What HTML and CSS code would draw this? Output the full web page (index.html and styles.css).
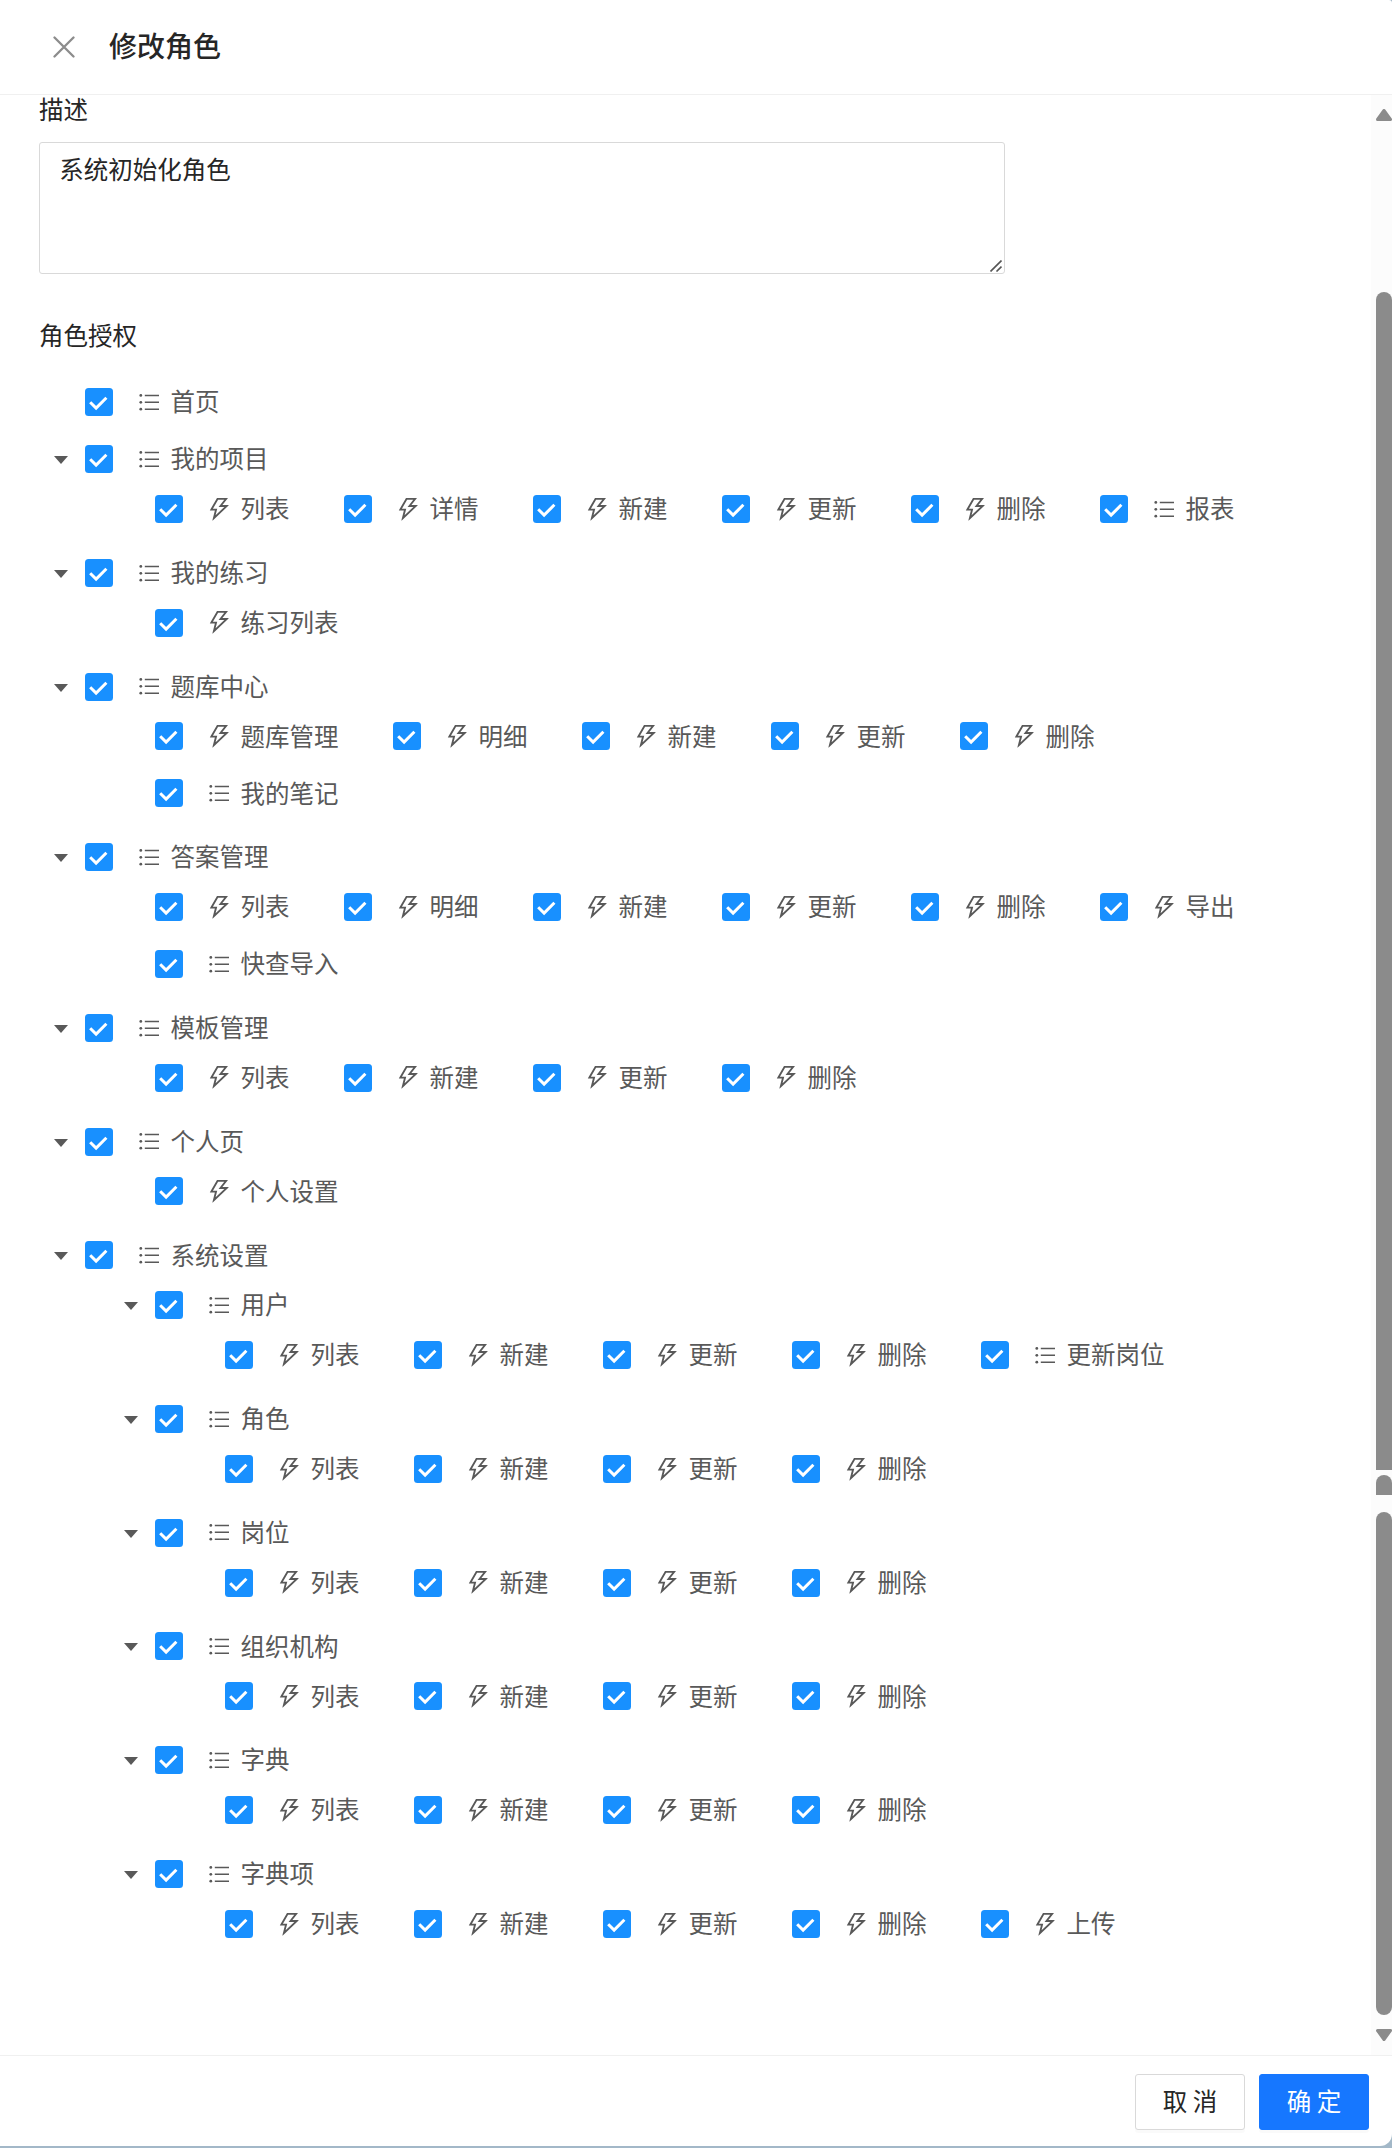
FILE: index.html
```html
<!DOCTYPE html>
<html lang="zh-CN">
<head>
  <meta charset="UTF-8" />
  <meta name="viewport" content="width=device-width, initial-scale=1.0"/>
  <title>修改角色</title>
  <link rel="stylesheet" href="styles.css">
</head>
<body>

  <!-- icon sprites -->
  <svg class="sprites" width="0" height="0">
    <symbol id="icon-list" viewBox="0 0 24.5 24.5">
      <path d="M7.8 5.4h14.2M7.8 12.3h14.2M7.8 19.2h14.2" stroke="currentColor" stroke-width="1.5"/>
      <circle cx="3.8" cy="5.4" r="1.4" fill="currentColor"/>
      <circle cx="3.8" cy="12.3" r="1.4" fill="currentColor"/>
      <circle cx="3.8" cy="19.2" r="1.4" fill="currentColor"/>
    </symbol>
    <symbol id="icon-action" viewBox="64 64 896 896">
      <path fill="currentColor" d="M848 359.3H627.7L825.8 109c4.1-5.3.4-13-6.3-13H436c-2.8 0-5.5 1.5-6.9 4L170 547.5c-3.1 5.3.7 12 6.9 12h174.4l-89.4 357.6c-1.9 7.8 7.5 13.3 13.3 7.7L853.5 373c5.2-4.9 1.7-13.7-5.5-13.7zM378.2 732.5l60.3-241H281.1l189.6-327.4h224.6L487 427.4h211L378.2 732.5z"/>
    </symbol>
    <symbol id="icon-check" viewBox="0 0 28 28">
      <path d="M5.2 14.2l5.9 5.9L21.4 9.8" fill="none" stroke="#fff" stroke-width="3"/>
    </symbol>
  </svg>

  <div class="drawer">
    <header class="drawer-header">
      <svg class="close" viewBox="0 0 22 22"><path d="M1.5 1.5l19 19M20.5 1.5l-19 19"/></svg>
      <h1>修改角色</h1>
    </header>

    <div class="drawer-body">
      <div class="form">
        <label class="label" for="desc">描述</label>
        <div class="textarea-wrap">
          <textarea id="desc">系统初始化角色</textarea>
          <svg class="resizer" viewBox="0 0 12 12"><path d="M.5 11.5l11-11M6.5 11.5l5-5"/></svg>
        </div>
        <div class="label">角色授权</div>
        <ul class="tree" id="tree"></ul>
      </div>

      <div class="scrollbar">
        <svg class="arrow" viewBox="0 0 16 12"><path d="M8 1.5L14.5 10.5h-13z"/></svg>
        <div class="thumb thumb-top"></div>
        <div class="thumb thumb-mid"></div>
        <div class="thumb thumb-bottom"></div>
        <svg class="arrow arrow-down" viewBox="0 0 16 12"><path d="M8 10.5L14.5 1.5h-13z"/></svg>
      </div>
    </div>

    <footer class="drawer-footer">
      <button class="btn">取 消</button>
      <button class="btn btn-primary">确 定</button>
    </footer>
  </div>

  <script>
    // rows: [a, b, ...] = items on one line, leading "#" = menu, otherwise action
    const tree = [
      { name: '首页' },
      { name: '我的项目', rows: [['列表', '详情', '新建', '更新', '删除', '#报表']] },
      { name: '我的练习', rows: [['练习列表']] },
      { name: '题库中心', rows: [['题库管理', '明细', '新建', '更新', '删除'], ['#我的笔记']] },
      { name: '答案管理', rows: [['列表', '明细', '新建', '更新', '删除', '导出'], ['#快查导入']] },
      { name: '模板管理', rows: [['列表', '新建', '更新', '删除']] },
      { name: '个人页', rows: [['个人设置']] },
      { name: '系统设置', children: [
        { name: '用户', rows: [['列表', '新建', '更新', '删除', '#更新岗位']] },
        { name: '角色', rows: [['列表', '新建', '更新', '删除']] },
        { name: '岗位', rows: [['列表', '新建', '更新', '删除']] },
        { name: '组织机构', rows: [['列表', '新建', '更新', '删除']] },
        { name: '字典', rows: [['列表', '新建', '更新', '删除']] },
        { name: '字典项', rows: [['列表', '新建', '更新', '删除', '上传']] }
      ] }
    ];

    function item(name) {
      const icon = name[0] === '#' ? 'list' : 'action';
      return `<span class="item">
        <svg class="checkbox"><use href="#icon-check"/></svg>
        <svg class="icon"><use href="#icon-${icon}"/></svg>
        <span class="name">${name.replace('#', '')}</span>
      </span>`;
    }

    function node(n) {
      const open = n.rows || n.children;
      let html = `<li><div class="row"><span class="switch">${open ? '<i class="caret"></i>' : ''}</span>${item('#' + n.name)}</div>`;
      if (n.rows) {
        html += '<ul>' + n.rows.map(r => `<li><div class="row"><span class="switch"></span>${r.map(item).join('')}</div></li>`).join('') + '</ul>';
      }
      if (n.children) html += '<ul>' + n.children.map(node).join('') + '</ul>';
      return html + '</li>';
    }

    document.getElementById('tree').innerHTML = tree.map(node).join('');
  </script>
</body>
</html>
```
FILE: styles.css
```css
* {
  box-sizing: border-box;
}

body {
  margin: 0;
  background: #a3b8c8;
  color: #262626;
  font-family: "Noto Sans CJK SC", sans-serif;
  font-size: 24.5px;
}

ul {
  list-style: none;
  margin: 0;
  padding: 0;
}

.sprites {
  position: absolute;
}

.drawer {
  display: flex;
  flex-direction: column;
  height: 2146px;
  background: #fff;
  border-radius: 0 3px 12px 0;
  overflow: hidden;
}

.drawer-header {
  display: flex;
  align-items: center;
  flex: none;
  height: 95px;
  padding-left: 53px;
  border-bottom: 1px solid #f0f0f0;
}

.drawer-header h1 {
  margin: -4px 0 0 34px;
  font-size: 28px;
  font-weight: 500;
  line-height: 42px;
}

.close {
  width: 22px;
  height: 22px;
  fill: none;
  stroke: #8c8c8c;
  stroke-width: 2.3;
  stroke-linecap: round;
}

.drawer-body {
  display: flex;
  flex: 1;
  min-height: 0;
}

.form {
  flex: 1;
  padding-left: 39px;
}

.label {
  display: block;
  height: 38px;
  line-height: 28px;
}

.textarea-wrap {
  position: relative;
  width: 966px;
  height: 132px;
  margin: 9px 0 47px;
}

.textarea-wrap textarea {
  display: block;
  width: 100%;
  height: 100%;
  padding: 7px 19.25px;
  border: 1px solid #d9d9d9;
  border-radius: 3px;
  outline: none;
  resize: none;
  color: inherit;
  font: inherit;
  line-height: 38.5px;
}

.resizer {
  position: absolute;
  right: 3px;
  bottom: 2px;
  width: 12px;
  height: 12px;
  fill: none;
  stroke: #555;
  stroke-width: 1.6;
}

/* permission tree */
.tree {
  margin-top: 14.3px;
  color: #595959;
}

.tree li {
  padding: 7.875px 0 7px;
}

.tree ul {
  padding-left: 70px;
}

.row {
  display: flex;
  align-items: center;
  height: 42px;
}

.switch {
  width: 46px;
  padding-left: 15px;
}

.caret {
  display: block;
  width: 0;
  margin-top: 2px;
  border: 7px solid transparent;
  border-width: 8px 7px 0;
  border-top-color: #595959;
}

.item {
  display: flex;
  align-items: center;
  margin-right: 54.4px;
}

.checkbox {
  width: 28px;
  height: 28px;
  border-radius: 3.5px;
  background: #1890ff;
}

.icon {
  width: 24.5px;
  height: 24.5px;
  margin: 0 9.1px 0 24px;
}

.name {
  margin-top: -1.5px;
  line-height: 42px;
}

.scrollbar {
  display: flex;
  flex-direction: column;
  align-items: flex-end;
  width: 21px;
  padding: 14px 0;
  background: #fcfcfc;
}

.arrow {
  width: 16px;
  height: 12px;
  fill: #8b8b8b;
  stroke: #8b8b8b;
  stroke-width: 3;
  stroke-linejoin: round;
}

.arrow-down {
  margin-top: 14px;
}

.thumb {
  width: 16px;
  background: #8b8b8b;
  border-radius: 8px 8px 0 0;
}

.thumb-top {
  height: 1178px;
  margin-top: 171px;
}

.thumb-mid {
  height: 20px;
  margin-top: 5px;
}

.thumb-bottom {
  height: 503px;
  margin-top: 17px;
  border-radius: 8px;
}

.drawer-footer {
  display: flex;
  justify-content: flex-end;
  gap: 14px;
  flex: none;
  height: 91px;
  padding: 18px 23px 0;
  border-top: 1px solid #f0f0f0;
}

.btn {
  width: 110px;
  height: 56px;
  padding: 0 0 4px;
  border: 1px solid #d9d9d9;
  border-radius: 3px;
  background: #fff;
  box-shadow: 0 3px 0 rgba(0, 0, 0, 0.02);
  color: #262626;
  font: inherit;
}

.btn-primary {
  border-color: #1677ff;
  background: #1677ff;
  color: #fff;
}
```
